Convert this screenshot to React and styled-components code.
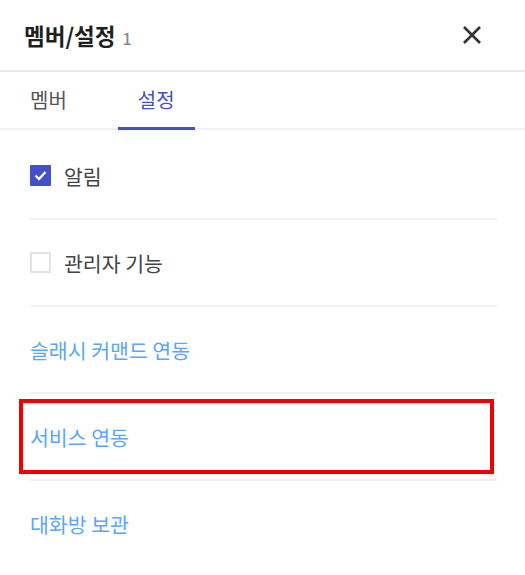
import styled, { createGlobalStyle } from "styled-components";

const GlobalStyle = createGlobalStyle`
  body {
    margin: 0;
    background: #ffffff;
    font-family: "Noto Sans CJK KR", "Noto Sans", sans-serif;
  }
`;

const Panel = styled.div`
  width: 525px;
  height: 575px;
  background: #fff;
  display: flex;
  flex-direction: column;
`;

const Header = styled.div`
  height: 70px;
  display: flex;
  align-items: center;
  justify-content: space-between;
  padding: 0 43px 0 24px;
  border-bottom: 2px solid #e6e8ec;
`;

const Title = styled.h1`
  margin: 0;
  font-size: 22.5px;
  font-weight: 700;
  color: #1f1f1f;
  display: flex;
  align-items: baseline;
  gap: 7px;
`;

const Count = styled.span`
  font-size: 16px;
  font-weight: 500;
  color: #8a8a8a;
`;

const CloseButton = styled.button`
  border: none;
  background: none;
  padding: 0;
  display: flex;
  cursor: pointer;
`;

const Tabs = styled.div`
  display: flex;
  gap: 31px;
  padding-left: 10px;
  height: 56px;
  border-bottom: 2px solid #eef1f5;
`;

const Tab = styled.div`
  display: flex;
  align-items: center;
  padding: 0 20px;
  margin-bottom: -2px;
  font-size: 20px;
  color: ${(props) => (props.active ? "#4550c8" : "#555")};
  border-bottom: 3px solid ${(props) => (props.active ? "#4550c8" : "transparent")};
`;

const List = styled.div`
  display: flex;
  flex-direction: column;
  padding: 3px 28px 0 30px;
`;

const Row = styled.div`
  position: relative;
  height: 85px;
  display: flex;
  align-items: center;
  gap: 13px;
  border-bottom: ${(props) => (props.last ? "none" : "2px solid #eef1f5")};
  &::after {
    content: "";
    display: ${(props) => (props.highlight ? "block" : "none")};
    position: absolute;
    left: -11px;
    right: 3px;
    top: 5px;
    bottom: 5px;
    border: 4px solid #f20000;
  }
`;

const Box = styled.span`
  width: 21px;
  height: 21px;
  box-sizing: border-box;
  display: flex;
  align-items: center;
  justify-content: center;
  border-radius: 1px;
  background: ${(props) => (props.checked ? "#4450c9" : "#fff")};
  border: 2px solid ${(props) => (props.checked ? "#4450c9" : "#e2e2e2")};
`;

const Label = styled.span`
  font-size: 20.5px;
  color: #444;
`;

const LinkText = styled.span`
  font-size: 20.5px;
  color: #5ba6f6;
`;

function Checkbox({ checked }) {
  return (
    <Box checked={checked}>
      {checked && (
        <svg width="13" height="11" viewBox="0 0 13 11">
          <path d="M1.5 5.5 L5 9 L11.5 2" stroke="#fff" strokeWidth="2.4" fill="none" />
        </svg>
      )}
    </Box>
  );
}

export default function App() {
  return (
    <Panel>
      <GlobalStyle />
      <Header>
        <Title>
          멤버/설정 <Count>1</Count>
        </Title>
        <CloseButton>
          <svg width="20" height="18" viewBox="0 0 20 18">
            <path d="M2 1 L18 17 M18 1 L2 17" stroke="#333" strokeWidth="2.6" />
          </svg>
        </CloseButton>
      </Header>
      <Tabs>
        <Tab>멤버</Tab>
        <Tab active>설정</Tab>
      </Tabs>
      <List>
        <Row>
          <Checkbox checked />
          <Label>알림</Label>
        </Row>
        <Row>
          <Checkbox />
          <Label>관리자 기능</Label>
        </Row>
        <Row>
          <LinkText>슬래시 커맨드 연동</LinkText>
        </Row>
        <Row highlight>
          <LinkText>서비스 연동</LinkText>
        </Row>
        <Row last>
          <LinkText>대화방 보관</LinkText>
        </Row>
      </List>
    </Panel>
  );
}
